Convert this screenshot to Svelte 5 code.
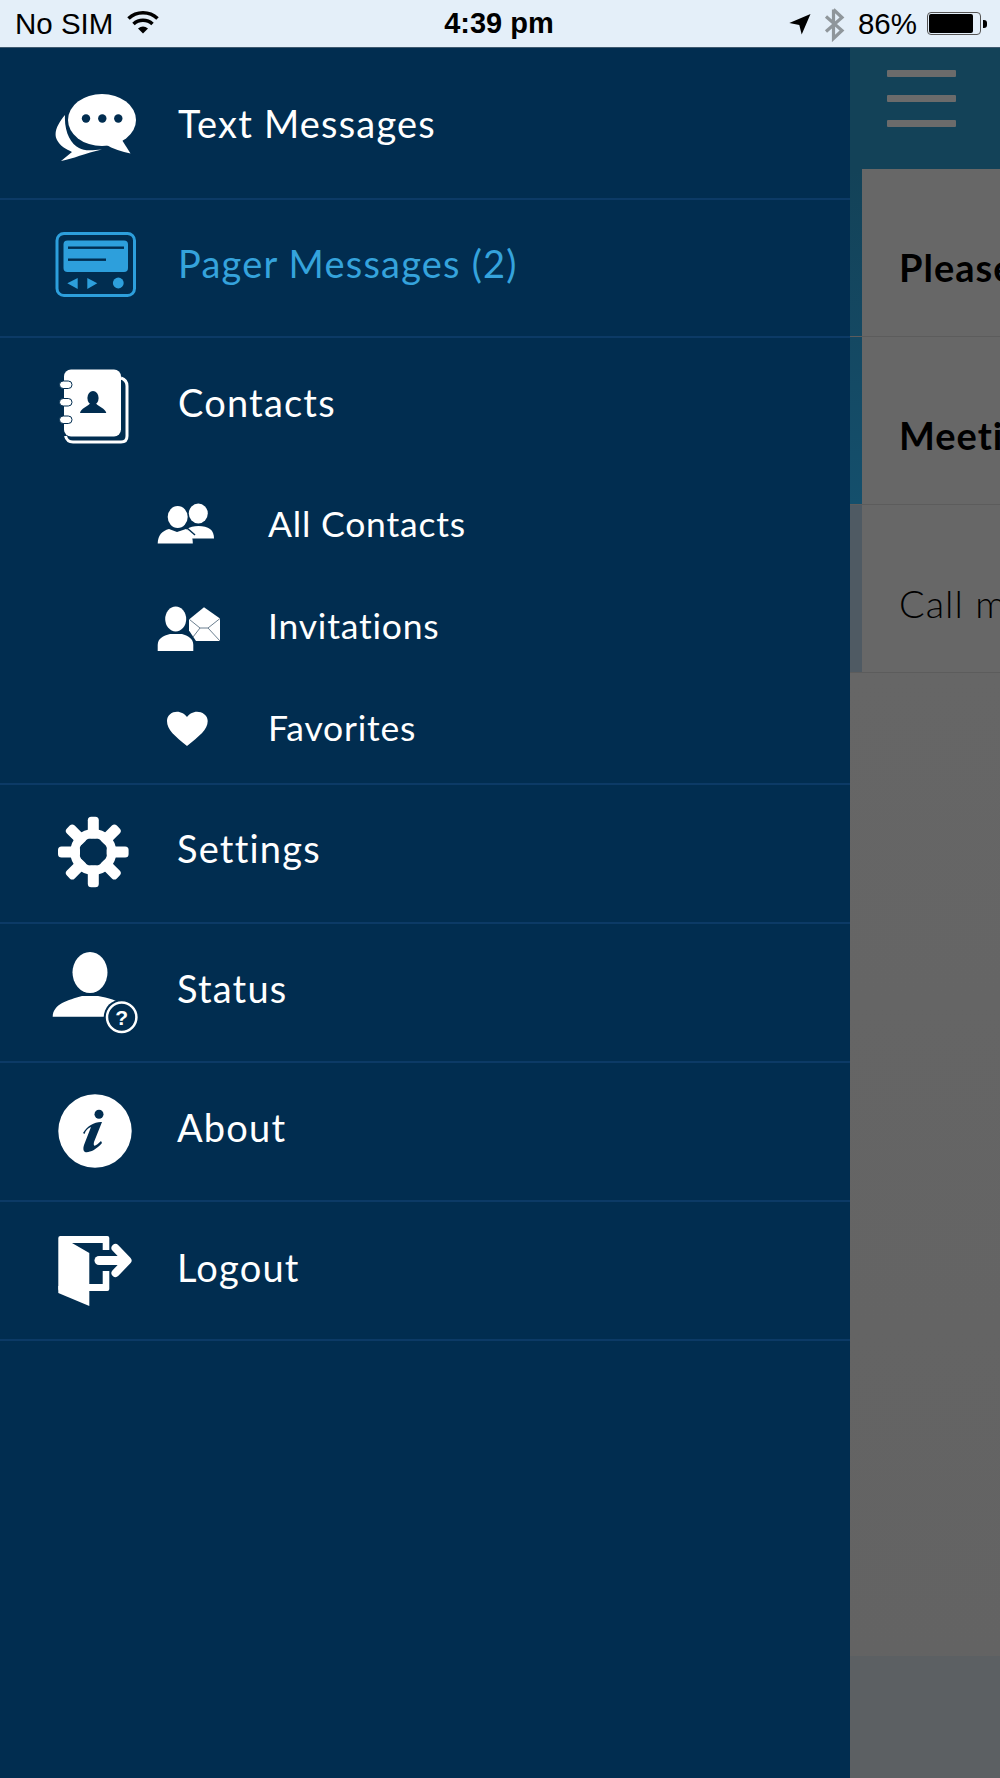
<script>
  const gearAngles = [0, 45, 90, 135, 180, 225, 270, 315];
</script>

<div class="phone">
  <header class="status">
    <div class="st-left">
      <span>No SIM</span>
      <svg class="wifi" viewBox="126 10 34 27" aria-hidden="true">
        <path d="M128.5 20.5a21 21 0 0 1 29 0" fill="none" stroke="#000" stroke-width="3.6" />
        <path d="M133.5 26a14 14 0 0 1 19 0" fill="none" stroke="#000" stroke-width="3.6" />
        <path d="M138 30.6a8 8 0 0 1 10 0L143 35.5Z" fill="#000" />
      </svg>
    </div>
    <div class="time">4:39 pm</div>
    <div class="st-right">
      <svg class="loc" viewBox="786 13 26 24" aria-hidden="true">
        <path d="M809.5 15 788.3 24l10 2 2.4 9.5Z" fill="#000" />
      </svg>
      <svg class="bt" viewBox="822 6 22 36" aria-hidden="true">
        <path d="M832.5 9.500V38.500L841 30.500 825 16.500M825 31.500 841 17.500 832.500 9.500" fill="none" stroke="#8f969b" stroke-width="3.2" />
      </svg>
      <span class="pct">86%</span>
      <div class="battery"><div class="level"></div></div>
      <div class="nub"></div>
    </div>
  </header>

  <div class="stage">
    <nav class="drawer">
      <a class="row first">
        <svg class="ic chat" viewBox="55 94 81 68" aria-hidden="true">
          <ellipse cx="102" cy="120" rx="34" ry="26" fill="#fff" />
          <path d="M122 140 130.500 153.500C122 152 113 149 105 144Z" fill="#fff" />
          <path d="M65 115C58 123 53 133 57 140 60 146 66 149 72 152L61 161C73 159 85 153 102 149.500 91 150.500 84 151 79 148 71 144 64 132 65 115Z" fill="#fff" />
          <circle cx="86" cy="118.500" r="4.200" fill="#012d50" />
          <circle cx="102.300" cy="118.500" r="4.200" fill="#012d50" />
          <circle cx="118.300" cy="118.500" r="4.200" fill="#012d50" />
        </svg>
        <span class="label">Text Messages</span>
      </a>

      <a class="row active">
        <svg class="ic pager" viewBox="55 232 82 66" aria-hidden="true">
          <rect x="57" y="234.500" width="77.500" height="62" rx="7" fill="none" stroke="#2d9fdc" stroke-width="3" />
          <rect x="63.500" y="241.500" width="64.500" height="31.500" rx="4" fill="#2d9fdc" />
          <rect x="68" y="247.500" width="56" height="2.400" fill="#012d50" />
          <rect x="68" y="259.500" width="38" height="2.400" fill="#012d50" />
          <path d="M67.300 284.300 77.700 279V290ZM87.300 279V290L97.300 284.300Z" fill="#2d9fdc" />
          <circle cx="118.300" cy="284" r="5.400" fill="#2d9fdc" />
        </svg>
        <span class="label">Pager Messages (2)</span>
      </a>

      <section class="group">
        <a class="row parent">
          <svg class="ic book" viewBox="60 368 70 76" aria-hidden="true">
            <path d="M122 378Q128 380 128 386V436Q128 442 122 442H74Q68 442 66.500 436" fill="none" stroke="#fff" stroke-width="3" />
            <rect x="65" y="369.500" width="57" height="67" rx="7" fill="#fff" />
            <g fill="#fff" stroke="#012d50" stroke-width="1">
              <rect x="60.500" y="381" width="12.500" height="7.500" rx="3.700" />
              <rect x="60.500" y="398.500" width="12.500" height="7.500" rx="3.700" />
              <rect x="60.500" y="416" width="12.500" height="7.500" rx="3.700" />
            </g>
            <ellipse cx="94" cy="398" rx="5.600" ry="7" fill="#012d50" />
            <path d="M81 413C82 408 88 407 91 403.500H97C100 407 106 408 107.300 413Z" fill="#012d50" />
          </svg>
          <span class="label">Contacts</span>
        </a>

        <a class="row sub">
          <svg class="ic people" viewBox="157 503 58 43" aria-hidden="true">
            <ellipse cx="198.300" cy="514.500" rx="9.500" ry="10" fill="#fff" />
            <path d="M187 530C192 526 205 526 210 530 213 532 214 536 214 539.500H190Z" fill="#fff" />
            <ellipse cx="177.700" cy="518" rx="10" ry="11" fill="#fff" />
            <path d="M157.700 544.500C158 536 162 532 169 530L177 533 186 530C190 532 193 537 192.800 544.500Z" fill="#fff" />
            <path d="M187 529 195 536" stroke="#012d50" stroke-width="1.500" />
          </svg>
          <span class="label">All Contacts</span>
        </a>

        <a class="row sub">
          <svg class="ic invite" viewBox="157 606 65 46" aria-hidden="true">
            <ellipse cx="175.700" cy="619" rx="10.500" ry="12.500" fill="#fff" />
            <path d="M157.700 651V645C158 638 163 636 170 634H182C188 636 193 638 193.300 645V651Z" fill="#fff" />
            <path d="M204 607.300 220 618.500V641H196L189 630.500V619.500Z" fill="#fff" />
            <path d="M189.500 619.500 200 628H208L220 618.500M200 628 193 637M208 628 220 641" fill="none" stroke="#6b7f90" stroke-width="1" />
          </svg>
          <span class="label inv">Invitations</span>
        </a>

        <a class="row sub">
          <svg class="ic heart" viewBox="166 712 43 36" aria-hidden="true">
            <path d="M187 747C175 737 167 731 167 722 167 716 172 712.700 177 712.700 181 712.700 185 715 187 718 189 715 193 712.700 197 712.700 202 712.700 207.700 716 207.700 722 207.700 731 199 737 187 747Z" fill="#fff" />
          </svg>
          <span class="label">Favorites</span>
        </a>
      </section>

      <a class="row">
        <svg class="ic gear" viewBox="57 815 73 72" aria-hidden="true">
          <circle cx="93.300" cy="851" r="18.500" fill="none" stroke="#fff" stroke-width="9" />
          {#each gearAngles as a}
            <rect x="87.800" y="815.700" width="11" height="22" rx="3.500" fill="#fff" transform="rotate({a} 93.300 851)" />
          {/each}
        </svg>
        <span class="label settings">Settings</span>
      </a>

      <a class="row">
        <svg class="ic person" viewBox="52 952 87 82" aria-hidden="true">
          <ellipse cx="90" cy="972.500" rx="17.500" ry="20.500" fill="#fff" />
          <path d="M52.700 1016.700C53 1004 68 1000 82 996H98C108 998 118 1000 124 1006V1016.700Z" fill="#fff" />
          <circle cx="121.700" cy="1017.300" r="18" fill="#012d50" />
          <circle cx="121.700" cy="1017.300" r="14.700" fill="#012d50" stroke="#fff" stroke-width="2.500" />
          <text x="121.700" y="1024.500" class="qm" text-anchor="middle">?</text>
        </svg>
        <span class="label lower">Status</span>
      </a>

      <a class="row">
        <svg class="ic info" viewBox="58 1094 74 75" aria-hidden="true">
          <circle cx="95" cy="1131" r="36.700" fill="#fff" />
          <circle cx="99" cy="1114.300" r="4.500" fill="#012d50" />
          <path d="M83 1133C87 1126 95 1121.500 102 1122L94 1142C93 1147 95 1147 101 1141L102 1143C96 1150 89 1153 85 1152 83 1151 83 1148 84 1145L91 1127C88 1128 86 1130 84.500 1134Z" fill="#012d50" />
        </svg>
        <span class="label lower nudge">About</span>
      </a>

      <a class="row">
        <svg class="ic door" viewBox="58 1234 75 72" aria-hidden="true">
          <rect x="58.300" y="1235" width="51" height="55" rx="2" fill="#fff" />
          <path d="M72 1242H102.700V1283H89.300V1252Z" fill="#012d50" />
          <path d="M58.300 1285 89.300 1284V1305L58.300 1292Z" fill="#fff" />
          <rect x="101" y="1249" width="10" height="21" fill="#012d50" />
          <path d="M99 1259.500H122" stroke="#fff" stroke-width="9" stroke-linecap="round" />
          <path d="M115.500 1247 127.500 1259.500 115.500 1272" fill="none" stroke="#fff" stroke-width="8" stroke-linecap="round" stroke-linejoin="round" />
        </svg>
        <span class="label last">Logout</span>
      </a>
    </nav>

    <div class="behind">
      <div class="topbar">
        <div class="burger"><i></i><i></i><i></i></div>
      </div>
      <div class="msg upper"><div class="card strong">Please call back</div></div>
      <div class="msg teal"><div class="card strong">Meeting today</div></div>
      <div class="msg slate"><div class="card">Call me when you can</div></div>
      <div class="rest"></div>
      <div class="foot"></div>
    </div>
  </div>
</div>

<style>
  :global(body) {
    margin: 0;
    background: #012d50;
  }
  .phone {
    width: 1000px;
    height: 1778px;
    display: flex;
    flex-direction: column;
    overflow: hidden;
    font-family: "Lato", "Open Sans", sans-serif;
  }
  .status {
    height: 47px;
    flex: none;
    background: #e4eff9;
    border-bottom: 1px solid #3f5a70;
    display: grid;
    grid-template-columns: 1fr auto 1fr;
    align-items: center;
    padding: 0 13px 0 15px;
    font: 400 29.5px/47px "Liberation Sans", Arial, sans-serif;
    color: #000;
  }
  .st-left {
    display: flex;
    align-items: center;
    gap: 13px;
  }
  .wifi {
    width: 34px;
    height: 27px;
    margin-top: -4px;
  }
  .time {
    font-weight: 700;
    font-size: 29px;
    margin-right: 4px;
  }
  .st-right {
    display: flex;
    align-items: center;
    justify-content: flex-end;
  }
  .loc {
    width: 26px;
    height: 24px;
    margin-right: 10px;
  }
  .bt {
    width: 22px;
    height: 36px;
    margin-right: 13px;
  }
  .pct {
    margin-right: 10px;
  }
  .battery {
    width: 54px;
    height: 23px;
    box-sizing: border-box;
    border: 1px solid #555;
    border-radius: 4px;
    padding: 1px;
    background: #e4eff9;
  }
  .level {
    width: 44px;
    height: 100%;
    background: #000;
    border-radius: 2px;
  }
  .nub {
    width: 4px;
    height: 8px;
    margin-left: 2px;
    background: #000;
    border-radius: 0 3px 3px 0;
  }
  .stage {
    flex: 1;
    display: flex;
    min-height: 0;
  }
  .drawer {
    width: 850px;
    flex: none;
    background: #012d50;
    color: #fff;
  }
  .row {
    height: 139px;
    box-sizing: border-box;
    display: flex;
    align-items: center;
    border-bottom: 2px solid #0c3a66;
  }
  .row.first {
    height: 152px;
  }
  .row.active {
    height: 138px;
    color: #35a3dc;
  }
  .group {
    border-bottom: 2px solid #0c3a66;
    height: 447px;
    box-sizing: border-box;
  }
  .row.parent {
    height: 129px;
    border-bottom: 0;
  }
  .row.sub {
    height: 102px;
    border-bottom: 0;
  }
  .label {
    font-size: 38px;
    line-height: 46px;
    font-weight: 400;
    letter-spacing: 1.2px;
    white-space: nowrap;
  }
  .row.active .label {
    padding-bottom: 10px;
  }
  .row.parent .label {
    padding-bottom: 2px;
  }
  .row.sub .label {
    font-size: 35.5px;
    letter-spacing: 0.8px;
    padding-top: 11px;
  }
  .label.inv {
    margin-left: -1px;
  }
  .label.settings {
    padding-bottom: 12px;
  }
  .label.lower {
    padding-bottom: 10px;
  }
  .label.last {
    padding-bottom: 8px;
    margin-left: -1px;
  }
  .label.nudge {
    margin-left: -1px;
  }
  .ic {
    flex: none;
    display: block;
  }
  .chat { width: 81px; height: 68px; margin: 10px 42px 0 55px; }
  .pager { width: 82px; height: 66px; margin: -8px 41px 0 55px; }
  .book { width: 70px; height: 76px; margin: 7px 49px 0 59px; }
  .people { width: 58px; height: 43px; margin: 10px 53px 0 157px; }
  .invite { width: 65px; height: 46px; margin: 18px 47px 0 157px; }
  .heart { width: 43px; height: 36px; margin: 14px 59px 0 166px; }
  .gear { width: 73px; height: 72px; margin: 0 47px 4px 57px; }
  .person { width: 87px; height: 82px; margin: 0 38px 0 52px; }
  .info { width: 74px; height: 75px; margin: 0 46px 0 58px; }
  .door { width: 75px; height: 72px; margin: 0 45px 0 58px; }
  .qm {
    font: 700 21px "Liberation Sans", Arial, sans-serif;
    fill: #fff;
  }
  .behind {
    flex: 1;
    min-width: 0;
    display: flex;
    flex-direction: column;
    background: #656565;
    overflow: hidden;
  }
  .topbar {
    height: 121px;
    flex: none;
    background: #134258;
    box-sizing: border-box;
    padding: 22px 0 0 37px;
  }
  .burger {
    width: 69px;
    display: flex;
    flex-direction: column;
    gap: 18px;
  }
  .burger i {
    display: block;
    height: 7px;
    background: #6b6b6b;
    border-radius: 1px;
  }
  .msg {
    height: 168px;
    flex: none;
    box-sizing: border-box;
    padding-left: 12px;
    border-bottom: 1px solid #5c5c5c;
  }
  .msg.upper {
    background: linear-gradient(#134258, #144862);
  }
  .msg.teal {
    background: linear-gradient(#144862, #144f6c);
  }
  .msg.slate {
    background: #4f5a63;
  }
  .card {
    height: 100%;
    box-sizing: border-box;
    background: #676767;
    color: #000;
    display: flex;
    align-items: center;
    padding: 29px 0 0 37px;
    font-size: 38px;
    letter-spacing: 1px;
    font-weight: 300;
    white-space: nowrap;
  }
  .card.strong {
    font-weight: 700;
  }
  .rest {
    flex: 1;
    background: linear-gradient(#666, #636363);
  }
  .foot {
    height: 122px;
    flex: none;
    background: #5c6063;
  }
</style>
